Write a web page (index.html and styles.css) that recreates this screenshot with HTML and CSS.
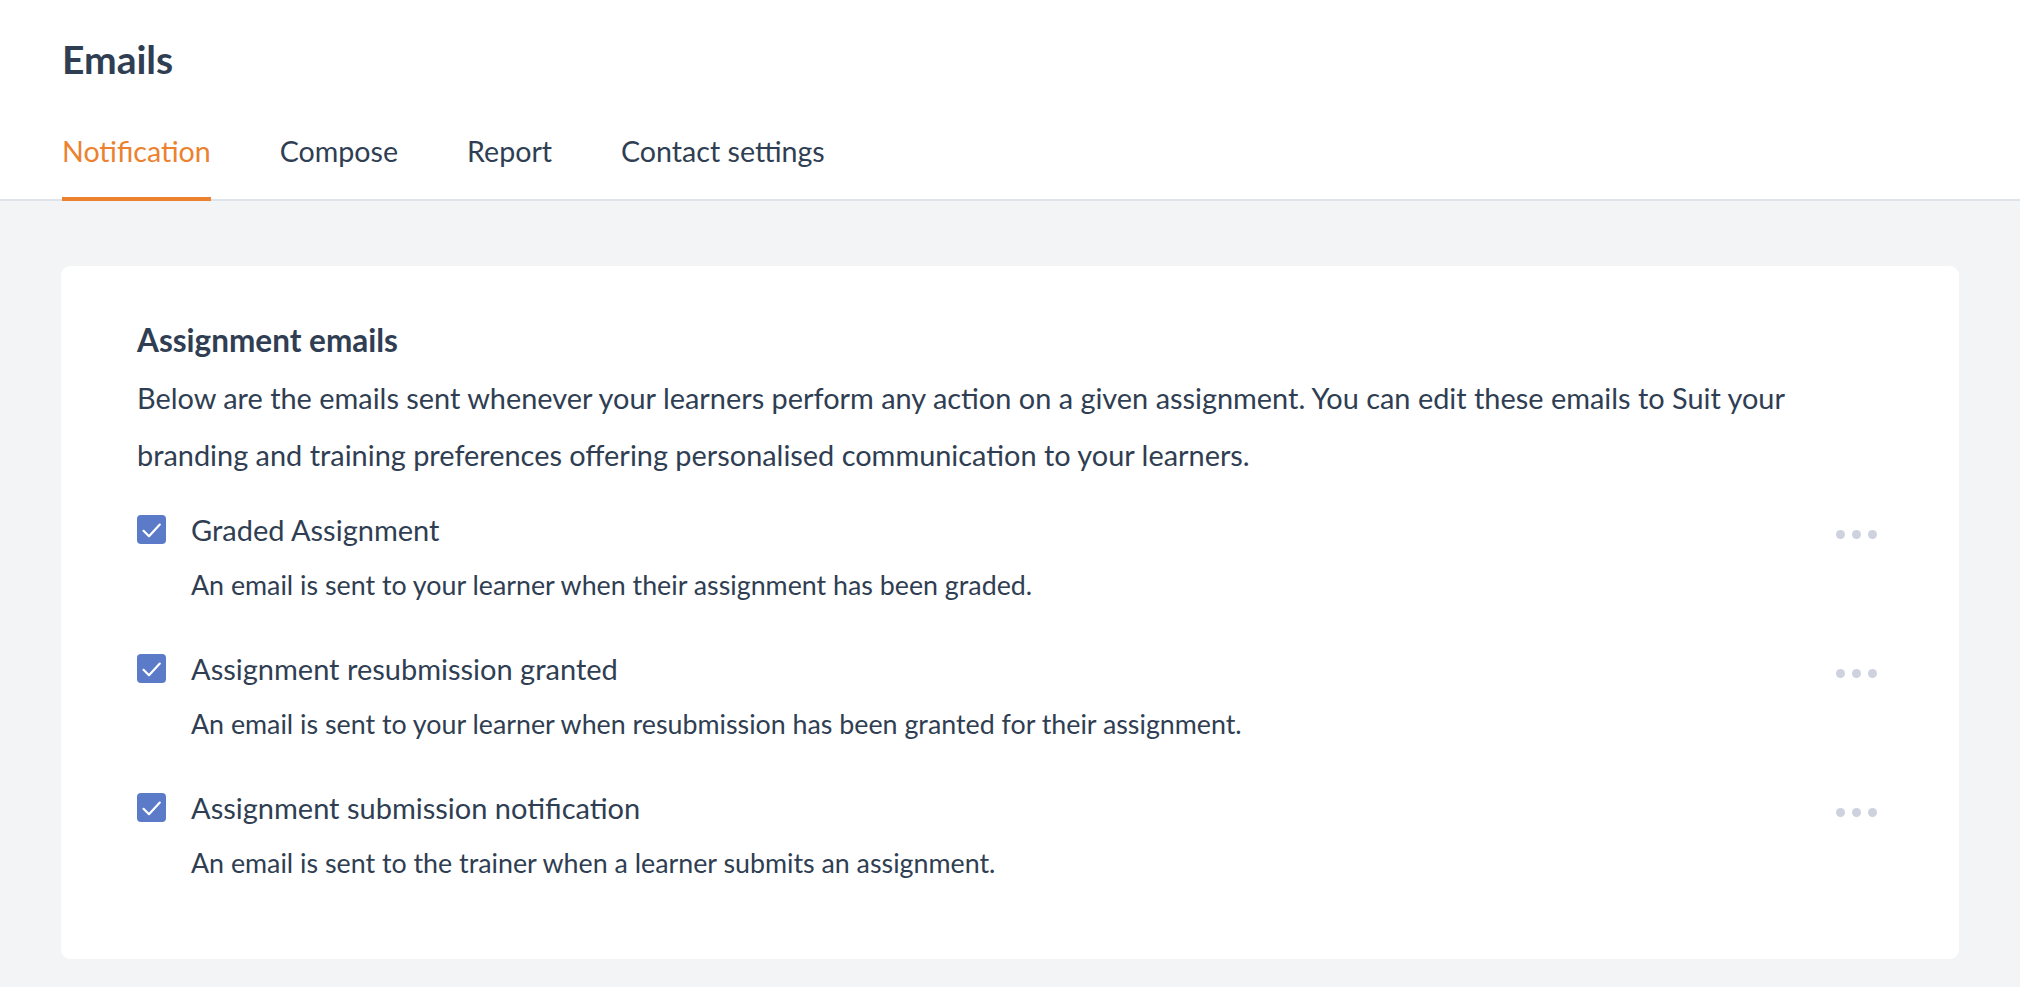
FILE: index.html
```html
<!DOCTYPE html>
<html lang="en">
<head>
  <meta charset="UTF-8" />
  <meta name="viewport" content="width=device-width, initial-scale=1" />
  <title>Emails - Notification</title>
  <link rel="stylesheet" href="styles.css">
</head>
<body>

  <header class="page-header">
    <h1 class="page-title">Emails</h1>
    <nav class="tabs">
      <a class="tab tab-active" href="#">Notification</a>
      <a class="tab" href="#">Compose</a>
      <a class="tab" href="#">Report</a>
      <a class="tab" href="#">Contact settings</a>
    </nav>
  </header>

  <main class="content">
    <section class="card">
      <h2 class="card-title">Assignment emails</h2>
      <p class="card-intro">Below are the emails sent whenever your learners perform any action on a given assignment. You can edit these emails to Suit your branding and training preferences offering personalised communication to your learners.</p>

      <ul class="email-list">
        <li class="email-item">
          <span class="checkbox">
            <svg viewBox="0 0 29 29" width="29" height="29"><path d="M6.5 15.8l5.5 5.4L22.8 9.6" fill="none" stroke="#fff" stroke-width="2.2" stroke-linecap="round" stroke-linejoin="round"/></svg>
          </span>
          <div class="email-text">
            <div class="email-name">Graded Assignment</div>
            <div class="email-desc">An email is sent to your learner when their assignment has been graded.</div>
          </div>
          <button class="more" type="button"><span></span><span></span><span></span></button>
        </li>
        <li class="email-item">
          <span class="checkbox">
            <svg viewBox="0 0 29 29" width="29" height="29"><path d="M6.5 15.8l5.5 5.4L22.8 9.6" fill="none" stroke="#fff" stroke-width="2.2" stroke-linecap="round" stroke-linejoin="round"/></svg>
          </span>
          <div class="email-text">
            <div class="email-name">Assignment resubmission granted</div>
            <div class="email-desc">An email is sent to your learner when resubmission has been granted for their assignment.</div>
          </div>
          <button class="more" type="button"><span></span><span></span><span></span></button>
        </li>
        <li class="email-item">
          <span class="checkbox">
            <svg viewBox="0 0 29 29" width="29" height="29"><path d="M6.5 15.8l5.5 5.4L22.8 9.6" fill="none" stroke="#fff" stroke-width="2.2" stroke-linecap="round" stroke-linejoin="round"/></svg>
          </span>
          <div class="email-text">
            <div class="email-name">Assignment submission notification</div>
            <div class="email-desc">An email is sent to the trainer when a learner submits an assignment.</div>
          </div>
          <button class="more" type="button"><span></span><span></span><span></span></button>
        </li>
      </ul>
    </section>
  </main>

</body>
</html>
```

FILE: styles.css
```css
:root {
  --ink: #2f3e52;
  --orange: #ec8130;
  --blue: #5b7bc8;
  --page-bg: #f3f4f6;
  --line: #dfe4ea;
  --dots: #cdd2de;
  --font-family: 'Lato', 'Open Sans', sans-serif;
}

body {
  margin: 0;
  background-color: var(--page-bg);
  color: var(--ink);
  font-family: var(--font-family);
}

.page-header {
  background-color: #fff;
  border-bottom: 2px solid var(--line);
  padding: 35px 62px 0;
}

.page-title {
  margin: 0;
  font-size: 39px;
  line-height: 48px;
  font-weight: 700;
}

.tabs {
  display: flex;
  gap: 69px;
  margin-top: 50px;
  margin-bottom: -2px;
}

.tab {
  display: block;
  padding-bottom: 28px;
  border-bottom: 4px solid transparent;
  color: var(--ink);
  text-decoration: none;
  font-size: 28.6px;
  line-height: 36px;
}

.tab-active {
  color: var(--orange);
  border-bottom-color: var(--orange);
}

.content {
  padding: 65px 61px 27px;
}

.card {
  background-color: #fff;
  border-radius: 9px;
  padding: 56px 82px 76px 76px;
}

.card-title {
  margin: 0;
  font-size: 31.5px;
  line-height: 36px;
  font-weight: 700;
}

.card-intro {
  margin: 11px 0 0;
  font-size: 28.9px;
  line-height: 57px;
}

.email-list {
  list-style: none;
  margin: 27px 0 0;
  padding: 0;
  display: flex;
  flex-direction: column;
  gap: 44px;
}

.email-item {
  display: flex;
  align-items: flex-start;
}

.checkbox {
  flex: none;
  width: 29px;
  height: 29px;
  margin-top: 5px;
  border-radius: 4px;
  background-color: var(--blue);
  display: flex;
  align-items: center;
  justify-content: center;
}

.email-text {
  flex: 1;
  margin-left: 25px;
}

.email-name {
  font-size: 29px;
  line-height: 40px;
}

.email-desc {
  margin-top: 15px;
  font-size: 26.8px;
  line-height: 40px;
}

.more {
  flex: none;
  display: flex;
  gap: 7px;
  margin-top: 20px;
  padding: 0;
  border: none;
  background: none;
  cursor: pointer;
}

.more span {
  width: 9px;
  height: 9px;
  border-radius: 50%;
  background-color: var(--dots);
}
```
